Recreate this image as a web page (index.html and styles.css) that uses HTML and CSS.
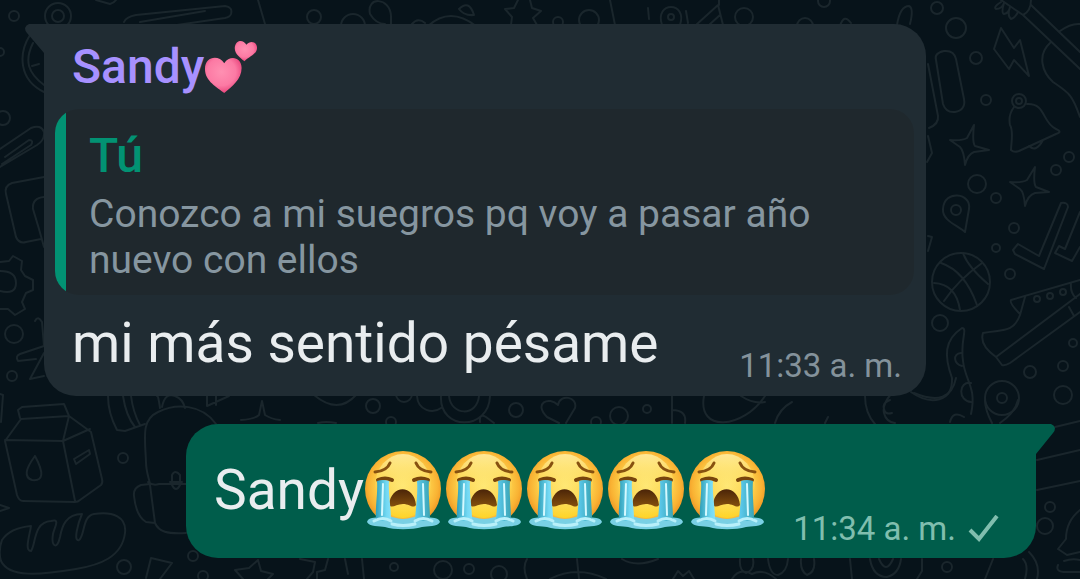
FILE: index.html
```html
<!DOCTYPE html>
<html lang="es">
<head>
    <meta charset="UTF-8">
    <meta name="viewport" content="width=device-width, initial-scale=1.0">
    <title>Chat</title>
    <link rel="stylesheet" href="styles.css">
</head>
<body>

    <!-- Doodle wallpaper behind the messages -->
    <svg class="wallpaper" viewBox="0 0 1080 579" preserveAspectRatio="xMinYMin slice" aria-hidden="true">
        <!-- Small circles -->
        <circle cx="14" cy="16" r="5"/><circle cx="0" cy="52" r="4"/><circle cx="3" cy="118" r="7"/>
        <circle cx="58" cy="16" r="13"/><circle cx="58" cy="16" r="6"/>
        <circle cx="314" cy="17" r="7"/><circle cx="353" cy="26" r="12"/>
        <circle cx="14" cy="334" r="9"/><circle cx="12" cy="376" r="5"/>
        <circle cx="123" cy="458" r="5"/><circle cx="124" cy="567" r="7"/><circle cx="193" cy="556" r="5"/><circle cx="203" cy="576" r="5"/>
        <circle cx="937" cy="8" r="6"/><circle cx="956" cy="28" r="10"/><circle cx="976" cy="58" r="6"/><circle cx="986" cy="100" r="5"/>
        <circle cx="977" cy="184" r="9"/><circle cx="996" cy="198" r="5"/><circle cx="1056" cy="170" r="5"/><circle cx="1069" cy="157" r="5"/>
        <circle cx="1014" cy="228" r="5"/><circle cx="996" cy="248" r="4"/><circle cx="1010" cy="274" r="5"/><circle cx="940" cy="323" r="8"/>
        <circle cx="1073" cy="343" r="4"/><circle cx="1063" cy="366" r="5"/><circle cx="1030" cy="372" r="6"/><circle cx="1063" cy="395" r="9"/>
        <circle cx="373" cy="406" r="7"/><circle cx="404" cy="394" r="8"/><circle cx="516" cy="410" r="7"/><circle cx="391" cy="422" r="5"/>
        <circle cx="619" cy="416" r="9"/><circle cx="647" cy="409" r="4"/><circle cx="596" cy="422" r="5"/>
        <circle cx="1050" cy="507" r="5"/><circle cx="1045" cy="526" r="8"/><circle cx="947" cy="567" r="5"/>
        <circle cx="558" cy="22" r="5"/><circle cx="589" cy="20" r="10"/><circle cx="744" cy="17" r="9"/><circle cx="824" cy="1" r="6"/><circle cx="805" cy="26" r="8"/>
        <circle cx="394" cy="567" r="4"/><circle cx="443" cy="570" r="9"/><circle cx="469" cy="569" r="5"/><circle cx="499" cy="574" r="8"/>
        <!-- Top edge -->
        <path d="M96 0l14 4q4-1 6-4M124 22q2-5 12-7L225 6q8 1 6 8-1 3-6 4L170 26M140 22L205 11M258 0l7 24"/>
        <path d="M370 14c-4-18 20-17 21 2v8M370 14q6 10 15 10M412 24q6-7 13-1M428 26q22-20 48 0M459 9q10-10 15 6-10 1-15-6z"/>
        <path d="M518 0l-4 8-9 1 7 8-1 8M530 0l2 8 9 3-8 7 4 7M610 0l5 25M648 8l1 11M686 11l2 12M696 25l22-20 5 20M709 25l11-10M719 0v5"/>
        <path d="M662 25c-8-24 26-24 18 0"/><circle cx="671" cy="17" r="3"/>
        <path d="M840 26q4-13 11-3M897 25q3-19 12-19 5 2 1 18"/>
        <!-- Clock, clip, box and gear at the left -->
        <path d="M30 35c-12 19-11 45 14 57M33 43c-9 18-5 30 11 42M32 66l7-2M0 149l31-21q10-4 13 4 1 8-7 13L0 167M5 157l24-17q5 0 2 5L2 164"/>
        <path d="M44 177l-32 6q-8 3-6 11l10 43q3 7 10 5l15-3M44 197q-12 1-11 12l6 20 5 18"/>
        <path d="M0 262l9-1 4-5 9 5-1 9 4 6 8 4v10l-7 3-4 9 3 7-10 6-7-6H0M0 271q16 0 16 12T0 291"/>
        <path d="M35 321q3-6 7 1l2 24M44 346l-24 8q-5 2-2 7l18-2M44 353l-14 26 14-3"/>
        <!-- Milk carton -->
        <path d="M20 418l-2-8 4-3 42-3 5 12-48 3-16 22 12 54q2 6 6 6l52 1q3 0 5-2l21-15q2-2 1-6l-11-47-22-16-6 25-58-1M63 441l12 60M63 441l27-12"/>
        <path d="M35 456q-15 20-3 24 17 2 3-24M74 459l15-9 1 4-14 10z"/>
        <!-- Bread -->
        <path d="M2 540c6-9 18-13 29-14-1 8-7 25 0 25 5-6 2-29 20-30 10-3 3 7 2 13-2 12 4 17 7 3 2-11 6-23 22-23-4 9-9 28-3 26 6-4 3-24 15-26 19-3 33 3 31 19-3 24-25 32-49 36-36 6-67 9-75-8q-3-10 1-21z"/>
        <path d="M0 505l9 3-9 3M0 394l3 1-2 27"/>
        <!-- Backpack -->
        <path d="M108 396q0 17 9 34l8 1 20-7M123 396q3 20 12 31M131 396q2 16 9 29"/>
        <path d="M157 396q1-2 3 12M162 407q3-15 13-11 8 3 10 12M207 396v10l22-10M216 396v9"/>
        <path d="M216 424c-14-20-40-21-58-12-17 8-13 25-12 50 0 10 3 16 4 22l-9 1q-8 3-7 11 2 20 12 26l9 1c4 9 12 11 31 10M148 482q5 4 11 2h27M150 485l5 38M172 475q3-6 8 0v10q-4 8-8 0zM170 482h12"/>
        <path d="M146 578l5-20 21 5-12 16M258 560l-9 8-14 2 8 9M258 560l3 11 12 3-5 5M300 559l15 3-2 10-6 7M328 559l-3 11-8 2v7M345 559l3 15M362 559l2 20"/>
        <!-- Strip between the messages -->
        <path d="M241 420q14-1 18-5l3-14 3 14q6 4 15 5M314 395q24 20 42 0M417 396c1 15 16 18 24 12M441 396c-2 35 48 35 49 0M449 396c2 20 28 21 30 0M480 422q-1-9 6-5l8 6M318 423q8-2 18 0"/>
        <path d="M559 423l-12-6c-14-14 2-21 11-12 2-12 20-8 17 3l-9 15M672 396v27M672 410q15 0 13 13M704 396c-7 37 39 33 61 0M741 396q12 8 24 6M775 423q4-14 17-21M825 423l3-6"/>
        <path d="M865 396q0 17 10 28M891 394q-9 11-7 19 2 9 11 10M890 400q-8 3-6 9 1 6 8 4M914 393q36 15 42-15M950 422q3-12 14-5M985 400q0 10 7 23M1018 400q-3 13-18 23"/>
        <!-- Food, guitar and lightning -->
        <path d="M928 64l10 52q1 8-9 12M928 136l4 17-5 9M936 60q-2-7 8-9 10-1 12 8l8 40q2 11-9 13-9 1-12-8z"/>
        <path d="M1001 0l22 15q8-4 8-15M1023 15l57 54M1031 5l49 47M1050 43c-13 12-8 29 3 39 16 11 19 12 27 35M1060 31q11-8 20-7"/>
        <path d="M1001 2q-8 5-5 7 6 0 8-6-3 10 0 11 5-1 6-7-3 9 1 12 4-1 7-7"/>
        <path d="M1001 28l13 20 6-8 9 36-15-16-5 9-15-20z"/>
        <!-- Bell -->
        <circle cx="1019" cy="101" r="7"/><circle cx="1019" cy="101" r="3"/>
        <path d="M1014 107q-6 8-4 18c4 7 1 18 1 25q3 3 8 1l37-17q7-2 0-5c-14-6-10-26-29-25M1029 146q7 7 14-6"/>
        <!-- Sparkles -->
        <path d="M974 125q-2 17 1 21l14 4-15 2q-6 2-9 13-1-14-5-18l-10-7q12 1 17-2zM1035 167q-2 16 1 20l13 5-14 1q-7 2-10 13-1-14-5-17l-10-7q12 1 17-2z"/>
        <!-- Pin -->
        <circle cx="956" cy="210" r="5"/>
        <path d="M943 209c1-20 29-16 26 0l-4 23c-6-6-23-11-22-23M928 236l4 1-4 14"/>
        <!-- Check marks -->
        <path d="M1018 244l-5 6 2 4 29 15 24-62q0-5-7-4l-22 53zM1080 212l-15 37-6-3-4 7 17 8 8-14"/>
        <!-- Basketball -->
        <circle cx="961" cy="282" r="29"/>
        <path d="M941 263q24 8 36 42M963 253q5 14 25 31M982 263q-24 17-38 38M934 283q22 1 26 27"/>
        <!-- Shoe -->
        <path d="M1080 280l-69 20q-2 3 9 14M1020 315l5-18M1020 315c-7 19-19 14-37 18q-4 12 13 24l6 8q3 1 8-2l70-51M996 357l84-63M1071 283q-1 10 5 15M1069 307l5 9"/>
        <circle cx="1037" cy="299" r="3"/><circle cx="1050" cy="296" r="3"/><circle cx="1063" cy="292" r="3"/>
        <!-- Pepper and disc -->
        <path d="M911 392c20 14 42 10 41-14-8-22-8-38 10-50 6 0-2 13 1 33 2 20 14 26 8 53M961 353c-9 1-7 11 1 13M971 383c-13-2-13 18 0 19"/>
        <circle cx="1002" cy="398" r="17"/><circle cx="1002" cy="398" r="5"/>
        <!-- Burger and lines at the right -->
        <path d="M1055 427l25-6M1037 460l43-10M1037 490l43-9M1080 510q-14 11-14 29l-8 10 9 6 13-3M1064 561q8-3 16-1M1058 565q-3 7 8 7h14"/>
        <!-- Bottom edge -->
        <path d="M527 559q-5 8 0 20M577 559l2 20M550 579q27-14 56 0M622 559q14 9 36 0M673 579l5-8 5 5 6-5 5 8M732 579q7-12 20-5 12-6 24 5"/>
        <path d="M740 559q-1 12 6 14 9-3 7-14M768 559q2 16 10 16 9-3 10-16M801 559q-1 12 6 16 9-3 7-16M850 559l2 20M870 559q3 18 17 18 12-3 14-18M879 559q7 16 14 0M922 559v12l-5 8M993 559l-8 20M1029 552q12 12 8 27M1023 559q6 6 2 20"/>
    </svg>

    <main class="chat">

        <!-- Received message -->
        <article class="bubble received">
            <svg class="tail tail-left" viewBox="0 0 20 30" aria-hidden="true">
                <path d="M20 0H5Q2 1 1 4 1 7 3 9L20 29z"/>
            </svg>
            <h2 class="sender">
                Sandy<svg class="hearts" viewBox="0 0 56 56" role="img" aria-label="Dos corazones">
                    <defs>
                        <radialGradient id="pink" cx=".45" cy=".4" r=".6">
                            <stop offset="0" stop-color="#ff90b2"/>
                            <stop offset=".65" stop-color="#fc7aa4"/>
                            <stop offset="1" stop-color="#e9477d"/>
                        </radialGradient>
                    </defs>
                    <path fill="url(#pink)" d="M21 55C14 49 1 43 1 30c0-13 14-15 20-6 6-9 18-6 18 5 0 12-10 19-18 26z"/>
                    <path fill="url(#pink)" d="M42 22C37 18 31 14 32 7c2-8 9-7 12-2 4-5 11-3 11 3 0 7-8 9-13 14z"/>
                </svg>
            </h2>
            <blockquote class="quote">
                <strong class="quote-author">Tú</strong>
                <p class="quote-text">Conozco a mi suegros pq voy a pasar año nuevo con ellos</p>
            </blockquote>
            <div class="line">
                <p class="text">mi más sentido pésame</p>
                <time class="time" datetime="11:33">11:33 a. m.</time>
            </div>
        </article>

        <!-- Sent message -->
        <article class="bubble sent">
            <svg class="tail tail-right" viewBox="0 0 20 30" aria-hidden="true">
                <path d="M0 0h15q3 1 4 4 0 3-2 5L0 30z"/>
            </svg>
            <div class="line">
                <p class="text">Sandy<span class="emojis"><svg class="cry" viewBox="0 0 78 80" role="img" aria-label="Cara llorando">
                    <defs>
                        <radialGradient id="skin" cx=".5" cy=".46" r=".54">
                            <stop offset="0" stop-color="#ffe775"/>
                            <stop offset=".6" stop-color="#fdd34c"/>
                            <stop offset=".85" stop-color="#f9b233"/>
                            <stop offset="1" stop-color="#ee9423"/>
                        </radialGradient>
                        <linearGradient id="shine" x2="0" y2="1">
                            <stop offset="0" stop-color="#fff3ae" stop-opacity=".8"/>
                            <stop offset=".6" stop-color="#ffe96a" stop-opacity="0"/>
                            <stop offset="1" stop-color="#ffdc22" stop-opacity=".8"/>
                        </linearGradient>
                        <linearGradient id="tear">
                            <stop offset="0" stop-color="#2f9fb8"/>
                            <stop offset=".2" stop-color="#73d9f4"/>
                            <stop offset=".5" stop-color="#b4f1ff"/>
                            <stop offset=".75" stop-color="#5bc9ec"/>
                            <stop offset="1" stop-color="#3aa4b4"/>
                        </linearGradient>
                        <linearGradient id="mouth" x2="0" y2="1">
                            <stop offset="0" stop-color="#4b2408"/>
                            <stop offset="1" stop-color="#84500d"/>
                        </linearGradient>
                        <g id="crying">
                            <circle cx="39" cy="39" r="38" fill="url(#skin)"/>
                            <ellipse cx="39" cy="36" rx="28" ry="32" fill="url(#shine)"/>
                            <path d="M11 22q12-1 15-9M67 22q-12-1-15-9" fill="none" stroke="#875110" stroke-width="3" stroke-linecap="round"/>
                            <path d="M14 30q7-3 14 0M50 30q7-3 14 0" fill="none" stroke="#78450d" stroke-width="4" stroke-linecap="round"/>
                            <path d="M25 55c2-21 25-21 27 0-3 4-6-1-13-1s-11 5-14 1z" fill="url(#mouth)"/>
                            <path d="M3 72c1-5 8-4 13-5 10-3 14 2 23 2s13-5 23-2c5 1 13 0 14 5-2 5-13 4-18 5-10 3-28 3-37 0-5-1-16 0-18-5z" fill="#79d0e4"/>
                            <path d="M13 31q6-2 12 0c-1 12 2 26 2 38q-7 4-15 0c-1-12 2-26 1-38zM53 31q6-2 12 0c-1 12 1 26 1 38q-7 4-15 0c1-12 3-26 2-38z" fill="url(#tear)"/>
                            <path d="M10 71q9-5 17 0M51 71q8-5 17 0M28 74q11 3 23 0" fill="none" stroke="#b8f0fa" stroke-width="3" stroke-linecap="round"/>
                            <path d="M19 34l-1 31M59 34l1 31" stroke="#d4f9ff" stroke-width="2" stroke-linecap="round"/>
                        </g>
                    </defs>
                    <use href="#crying"/>
                </svg><svg class="cry" viewBox="0 0 78 80" role="img" aria-label="Cara llorando"><use href="#crying"/></svg><svg class="cry" viewBox="0 0 78 80" role="img" aria-label="Cara llorando"><use href="#crying"/></svg><svg class="cry" viewBox="0 0 78 80" role="img" aria-label="Cara llorando"><use href="#crying"/></svg><svg class="cry" viewBox="0 0 78 80" role="img" aria-label="Cara llorando"><use href="#crying"/></svg></span></p>
                <div class="meta">
                    <time class="time" datetime="11:34">11:34 a. m.</time>
                    <svg class="check" viewBox="0 0 32 28" role="img" aria-label="Enviado">
                        <path d="M2 15l9 9L29 1"/>
                    </svg>
                </div>
            </div>
        </article>

    </main>

</body>
</html>
```

FILE: styles.css
```css
* {
    box-sizing: border-box;
}

body {
    margin: 0;
    min-height: 100vh;
    position: relative;
    overflow: hidden;
    background-color: #07131a;  /* Dark chat background */
    font-family: Roboto, "Liberation Sans", sans-serif;
}

h2, p, blockquote {
    margin: 0;
}

.wallpaper {
    position: absolute;
    top: 0;
    left: 0;
    width: 100%;
    height: 100%;
    fill: none;
    stroke: #1a262c;
    stroke-width: 2;
    stroke-linecap: round;
    stroke-linejoin: round;
}

.chat {
    position: relative;
    display: flex;
    flex-direction: column;
    gap: 28px;
    padding: 24px 44px 16px;
}

.bubble {
    position: relative;
    border-radius: 32px;
}

.received {
    margin-right: 110px;
    padding: 12px 12px 13px 11px;
    border-top-left-radius: 0;
    background-color: #202c33;
}

.sent {
    margin-left: 142px;
    padding: 24px 28px 12px;
    border-top-right-radius: 0;
    background-color: #005d4b;
}

/* Bubble tails */
.tail {
    position: absolute;
    top: 0;
    width: 20px;
    height: 30px;
}

.tail-left {
    right: 100%;
    fill: #202c33;
}

.tail-right {
    left: 100%;
    fill: #005d4b;
}

.sender {
    display: flex;
    align-items: center;
    height: 62px;
    padding-left: 17px;
    color: #a791ff;
    font-size: 48px;
    font-weight: 500;
    line-height: 62px;
}

.hearts {
    width: 54px;
    height: 56px;
}

/* Quoted message, the green bar is part of the background */
.quote {
    margin-top: 11px;
    padding: 24px 24px 12px 34px;
    border-radius: 24px;
    background: linear-gradient(to right, #029273 11px, #1f282d 11px);
    line-height: 46px;
}

.quote-author {
    display: block;
    margin-bottom: 12px;
    color: #029273;
    font-size: 48px;
    font-weight: 500;
}

.quote-text {
    color: #8696a0;
    font-size: 39px;
}

.line {
    display: flex;
    align-items: flex-end;
    justify-content: space-between;
}

.received .line {
    padding: 12px 12px 0 17px;
}

.text {
    display: flex;
    align-items: center;
    color: #e9edef;
    font-size: 55px;
    line-height: 72px;
}

.received .text {
    padding-bottom: 4px;
}

.sent .line {
    height: 98px;
}

.sent .text {
    align-self: flex-start;
    height: 84px;
}

.emojis {
    display: flex;
    gap: 3px;
}

.cry {
    width: 78px;
    height: 80px;
}

.time {
    color: #84929b;
    font-size: 33px;
    line-height: 34px;
}

.meta {
    display: flex;
    align-items: center;
    gap: 12px;
    padding-right: 8px;
}

.sent .time {
    color: #80beae;
}

.check {
    width: 32px;
    height: 28px;
    fill: none;
    stroke: #80beae;
    stroke-width: 4;
}
```
